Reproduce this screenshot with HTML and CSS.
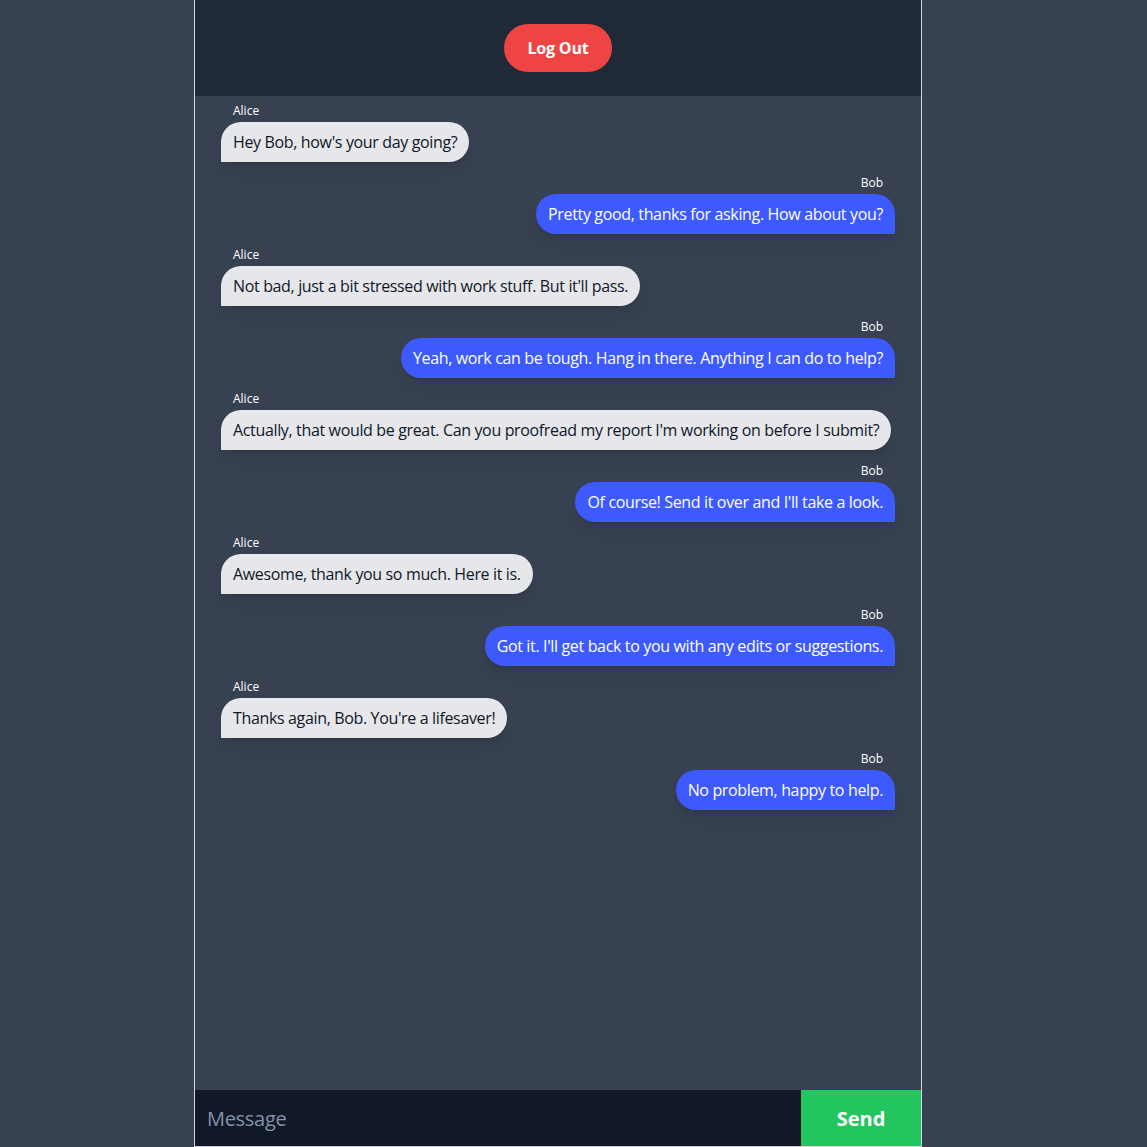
FILE: index.html
```html
<!DOCTYPE html>
<html>
<head>
<meta charset="utf-8">
<link rel="stylesheet" href="styles.css">
</head>
<body>
<div class="page">
  <div class="chat">
    <header class="header">
      <button class="logout">Log Out</button>
    </header>
    <main class="messages">
      <div class="msg left"><span class="name">Alice</span><div class="bubble">Hey Bob, how's your day going?</div></div>
      <div class="msg right"><span class="name">Bob</span><div class="bubble">Pretty good, thanks for asking. How about you?</div></div>
      <div class="msg left"><span class="name">Alice</span><div class="bubble">Not bad, just a bit stressed with work stuff. But it'll pass.</div></div>
      <div class="msg right"><span class="name">Bob</span><div class="bubble">Yeah, work can be tough. Hang in there. Anything I can do to help?</div></div>
      <div class="msg left"><span class="name">Alice</span><div class="bubble">Actually, that would be great. Can you proofread my report I'm working on before I submit?</div></div>
      <div class="msg right"><span class="name">Bob</span><div class="bubble">Of course! Send it over and I'll take a look.</div></div>
      <div class="msg left"><span class="name">Alice</span><div class="bubble">Awesome, thank you so much. Here it is.</div></div>
      <div class="msg right"><span class="name">Bob</span><div class="bubble">Got it. I'll get back to you with any edits or suggestions.</div></div>
      <div class="msg left"><span class="name">Alice</span><div class="bubble">Thanks again, Bob. You're a lifesaver!</div></div>
      <div class="msg right"><span class="name">Bob</span><div class="bubble">No problem, happy to help.</div></div>
    </main>
    <form class="composer">
      <input class="input" type="text" placeholder="Message">
      <button class="send" type="button">Send</button>
    </form>
  </div>
</div>
</body>
</html>
```

FILE: styles.css
```css
* { box-sizing: border-box; }
html, body { margin: 0; padding: 0; }
body {
  background: #374151;
  font-family: "Open Sans", "Noto Sans", sans-serif;
  height: 1147px;
  overflow: hidden;
}
.page {
  width: 1116px;
  display: flex;
  justify-content: center;
}
.chat {
  width: 728px;
  height: 1147px;
  border: 1px solid #d1d5db;
  border-top: none;
  display: flex;
  flex-direction: column;
  background: #374151;
}
.header {
  background: #1f2937;
  height: 96px;
  flex: none;
  display: flex;
  align-items: center;
  justify-content: center;
}
.logout {
  background: #ef4444;
  color: #fff;
  border: none;
  border-radius: 9999px;
  font-family: inherit;
  font-weight: 700;
  font-size: 16px;
  line-height: 24px;
  letter-spacing: -0.2px;
  height: 48px;
  width: 108px;
  padding: 0;
}
.messages {
  flex: 1;
  padding: 6px 26px 0;
  display: flex;
  flex-direction: column;
  gap: 12px;
}
.msg {
  display: flex;
  flex-direction: column;
}
.msg.left { align-items: flex-start; }
.msg.right { align-items: flex-end; }
.name {
  font-size: 12px;
  line-height: 17px;
  color: #fff;
  padding: 0 12px;
  margin-bottom: 3px;
}
.bubble {
  font-size: 16px;
  line-height: 24px;
  letter-spacing: -0.35px;
  white-space: nowrap;
  padding: 8px 12px;
  border-radius: 20px;
  box-shadow: 0 10px 15px -3px rgba(0,0,0,0.1), 0 4px 6px -4px rgba(0,0,0,0.1);
}
.left .bubble {
  background: #e5e7eb;
  color: #111827;
  border-bottom-left-radius: 0;
}
.right .bubble {
  background: #3d5afe;
  color: #fff;
  border-bottom-right-radius: 0;
}
.composer {
  margin: 0;
  height: 56px;
  flex: none;
  display: flex;
  background: #111827;
}
.input {
  flex: 1;
  min-width: 0;
  background: #111827;
  border: none;
  outline: none;
  color: #fff;
  font-family: inherit;
  font-size: 20px;
  letter-spacing: -0.3px;
  padding: 0 12px;
}
.input::placeholder { color: #8193ad; }
.send {
  width: 120px;
  background: #22c55e;
  color: #fff;
  border: none;
  font-family: inherit;
  font-weight: 700;
  font-size: 20px;
  padding: 0;
}
```
